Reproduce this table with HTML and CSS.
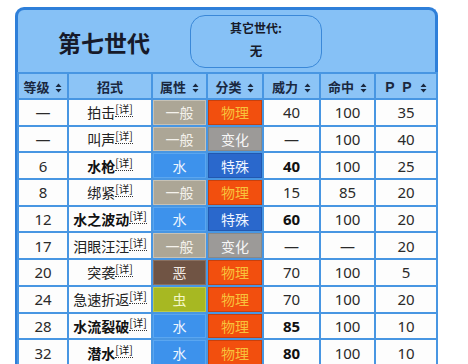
FILE: index.html
```html
<!DOCTYPE html>
<html lang="zh">
<head>
<meta charset="utf-8">
<link rel="stylesheet" href="styles.css">
</head>
<body>
<div class="panel">
  <div class="titlebar">
    <div class="gen">第七世代</div>
    <div class="other">
      <div class="other-label">其它世代:</div>
      <div class="other-val">无</div>
    </div>
  </div>
  <table class="moves">
    <colgroup>
      <col class="c1"><col class="c2"><col class="c3"><col class="c4"><col class="c5"><col class="c6"><col class="c7">
    </colgroup>
    <thead>
      <tr>
        <th>等级 <svg class="sort" viewBox="0 0 7 10"><path d="M3.5 0.5 L6.5 4 L0.5 4 Z M3.5 9.5 L6.5 6 L0.5 6 Z"/></svg></th>
        <th>招式</th>
        <th>属性 <svg class="sort" viewBox="0 0 7 10"><path d="M3.5 0.5 L6.5 4 L0.5 4 Z M3.5 9.5 L6.5 6 L0.5 6 Z"/></svg></th>
        <th>分类 <svg class="sort" viewBox="0 0 7 10"><path d="M3.5 0.5 L6.5 4 L0.5 4 Z M3.5 9.5 L6.5 6 L0.5 6 Z"/></svg></th>
        <th>威力 <svg class="sort" viewBox="0 0 7 10"><path d="M3.5 0.5 L6.5 4 L0.5 4 Z M3.5 9.5 L6.5 6 L0.5 6 Z"/></svg></th>
        <th>命中 <svg class="sort" viewBox="0 0 7 10"><path d="M3.5 0.5 L6.5 4 L0.5 4 Z M3.5 9.5 L6.5 6 L0.5 6 Z"/></svg></th>
        <th><span class="pp">P P</span> <svg class="sort" viewBox="0 0 7 10"><path d="M3.5 0.5 L6.5 4 L0.5 4 Z M3.5 9.5 L6.5 6 L0.5 6 Z"/></svg></th>
      </tr>
    </thead>
    <tbody>
      <tr><td>—</td><td class="mv">拍击<sup>[详]</sup></td><td class="t normal">一般</td><td class="k phys">物理</td><td>40</td><td>100</td><td>35</td></tr>
      <tr><td>—</td><td class="mv">叫声<sup>[详]</sup></td><td class="t normal">一般</td><td class="k status">变化</td><td>—</td><td>100</td><td>40</td></tr>
      <tr><td>6</td><td class="mv b">水枪<sup>[详]</sup></td><td class="t water">水</td><td class="k spec">特殊</td><td class="b">40</td><td>100</td><td>25</td></tr>
      <tr><td>8</td><td class="mv">绑紧<sup>[详]</sup></td><td class="t normal">一般</td><td class="k phys">物理</td><td>15</td><td>85</td><td>20</td></tr>
      <tr><td>12</td><td class="mv b">水之波动<sup>[详]</sup></td><td class="t water">水</td><td class="k spec">特殊</td><td class="b">60</td><td>100</td><td>20</td></tr>
      <tr><td>17</td><td class="mv">泪眼汪汪<sup>[详]</sup></td><td class="t normal">一般</td><td class="k status">变化</td><td>—</td><td>—</td><td>20</td></tr>
      <tr><td>20</td><td class="mv">突袭<sup>[详]</sup></td><td class="t dark">恶</td><td class="k phys">物理</td><td>70</td><td>100</td><td>5</td></tr>
      <tr><td>24</td><td class="mv">急速折返<sup>[详]</sup></td><td class="t bug">虫</td><td class="k phys">物理</td><td>70</td><td>100</td><td>20</td></tr>
      <tr><td>28</td><td class="mv b">水流裂破<sup>[详]</sup></td><td class="t water">水</td><td class="k phys">物理</td><td class="b">85</td><td>100</td><td>10</td></tr>
      <tr><td>32</td><td class="mv b">潜水<sup>[详]</sup></td><td class="t water">水</td><td class="k phys">物理</td><td class="b">80</td><td>100</td><td>10</td></tr>
    </tbody>
  </table>
</div>
</body>
</html>
```

FILE: styles.css
```css
html, body {
  margin: 0;
  padding: 0;
  background: #ffffff;
}
body {
  padding: 7px 0 0 15px;
  font-family: "Noto Sans", "Noto Sans CJK SC", sans-serif;
  color: #222;
}
.panel {
  width: 417px;
  border: 3px solid #2e7fd9;
  border-bottom: none;
  border-radius: 9px 9px 0 0;
  background: #86c1f6;
}
.titlebar {
  display: flex;
  height: 62px;
  align-items: flex-start;
}
.gen {
  width: 172px;
  text-align: center;
  font-family: "Noto Sans CJK SC", sans-serif;
  font-weight: 700;
  font-size: 23px;
  line-height: 64px;
  color: #161a2a;
}
.other {
  margin-top: 5px;
  width: 130px;
  height: 51px;
  border: 1.5px solid #3a88d8;
  border-radius: 15px;
  text-align: center;
  font-family: "Noto Sans CJK SC", sans-serif;
  font-weight: 700;
  color: #161a2a;
}
.other-label {
  font-size: 12px;
  margin-top: 4px;
  line-height: 16px;
}
.other-val {
  font-size: 12.5px;
  margin-top: 7px;
  line-height: 16px;
}
.moves {
  border-collapse: collapse;
  table-layout: fixed;
  width: 419px;
  margin-left: -1px;
}
.c1 { width: 50px; }
.c2 { width: 84px; }
.c3 { width: 55px; }
.c4 { width: 56px; }
.c5 { width: 57px; }
.c6 { width: 55px; }
.c7 { width: 62px; }
.moves th, .moves td {
  border: 2px solid #4896e2;
  padding: 0;
  text-align: center;
  white-space: nowrap;
}
.moves th {
  height: 24px;
  background: #8cc4f6;
  font-family: "Noto Sans CJK SC", sans-serif;
  font-weight: 700;
  font-size: 13px;
  color: #1a2840;
}
.pp {
  letter-spacing: 2px;
  font-family: "Liberation Sans", sans-serif;
  font-size: 14px;
}
.sort {
  width: 7px;
  height: 10px;
  fill: #1a2840;
  vertical-align: -1px;
  margin-left: 3px;
}
.moves td {
  height: 24.7px;
  background: #fdfdfd;
  font-size: 15px;
  color: #2a2a2a;
  line-height: 18px;
}
.moves td.mv {
  font-family: "Noto Sans CJK SC", sans-serif;
  font-size: 14px;
  color: #222;
}
.moves td.b {
  font-weight: 700;
  color: #111;
}
sup {
  font-family: "Noto Sans CJK SC", sans-serif;
  font-size: 10.5px;
  font-weight: 400;
  vertical-align: 5px;
  line-height: 0;
  border-bottom: 1px dotted #333;
}
.moves td.t, .moves td.k {
  font-family: "Noto Sans CJK SC", sans-serif;
  font-size: 14px;
  color: #fff;
}
.moves td.t.normal { background: #aca696; box-shadow: inset 0 0 0 1px #c7c2b6; color: #f4f2ec; }
.moves td.t.water { background: #3d92ec; box-shadow: inset 0 0 0 1px #5aa6f0; color: #eef6ff; }
.moves td.t.dark { background: #705444; box-shadow: inset 0 0 0 1px #8a7060; color: #f3ece6; }
.moves td.t.bug { background: #a7b822; box-shadow: inset 0 0 0 1px #bcc94a; color: #f4f7c8; }
.moves td.k.phys { background: #f24f0e; box-shadow: inset 0 0 0 1px #c8400c; color: #f8c23c; }
.moves td.k.status { background: #9c9a98; box-shadow: inset 0 0 0 1px #8a8886; color: #f6f6f6; }
.moves td.k.spec { background: #2a68cc; box-shadow: inset 0 0 0 1px #2258b0; color: #f0f6ff; }
```
